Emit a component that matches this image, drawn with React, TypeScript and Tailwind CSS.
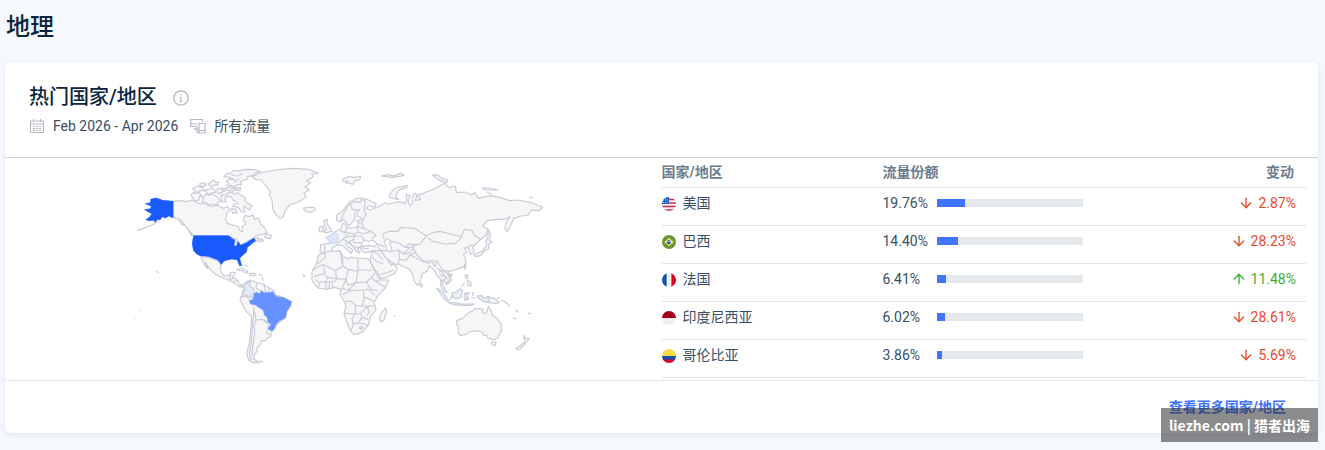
import { ArrowDown, ArrowUp } from "lucide-react";
import type { ReactNode } from "react";

interface CountryRow {
  name: string;
  share: number;
  change: number;
  flag: ReactNode;
}

const COUNTRIES: CountryRow[] = [
  { name: "美国", share: 19.76, change: -2.87, flag: <UsFlag /> },
  { name: "巴西", share: 14.4, change: -28.23, flag: <BrazilFlag /> },
  { name: "法国", share: 6.41, change: 11.48, flag: <FranceFlag /> },
  { name: "印度尼西亚", share: 6.02, change: -28.61, flag: <IndonesiaFlag /> },
  { name: "哥伦比亚", share: 3.86, change: -5.69, flag: <ColombiaFlag /> },
];

export default function App() {
  return (
    <main className="relative min-h-screen bg-[#f5f8fd] pr-[7px] pb-[17px] pl-[5px] font-['Roboto','Noto_Sans_CJK_SC',sans-serif] text-sm text-[#3a4f63]">
      <h1 className="flex h-[62px] items-center pb-2 pl-px text-2xl font-medium text-[#092540]">
        地理
      </h1>

      <section className="rounded-md bg-white shadow-[0_2px_6px_rgba(14,30,62,0.08)]">
        <header className="border-b border-[#cbd1d7] px-6 pt-[21px] pb-5">
          <div className="flex items-center gap-4">
            <h2 className="text-xl leading-7 font-medium text-[#092540]">
              热门国家/地区
            </h2>
            <InfoIcon />
          </div>
          <div className="mt-1 flex items-center gap-3 leading-[22px]">
            <div className="flex items-center gap-2">
              <CalendarIcon />
              <span>Feb 2026 - Apr 2026</span>
            </div>
            <div className="flex items-center gap-2">
              <DevicesIcon />
              <span>所有流量</span>
            </div>
          </div>
        </header>

        <div className="grid grid-cols-2">
          <div className="flex items-start justify-center pt-0.5 pl-3.5">
            <WorldMap />
          </div>
          <div className="pr-3 pb-0.5">
            <CountryTable />
          </div>
        </div>

        <footer className="flex h-[53px] items-center justify-end border-t border-[#e6e9ec] px-8">
          <a href="#countries" className="font-bold text-[#3e74fe]">
            查看更多国家/地区
          </a>
        </footer>
      </section>

      {/* Source stamp over the corner of the card */}
      <div className="absolute right-[7px] bottom-2 flex h-[34px] items-center bg-[#2d2d2d]/55 px-2 font-['Noto_Sans_CJK_SC',sans-serif] text-sm font-bold whitespace-nowrap text-white">
        liezhe.com | 猎者出海
      </div>
    </main>
  );
}

function CountryTable() {
  return (
    <table className="w-full table-fixed border-separate border-spacing-0">
      <thead>
        <tr className="text-left text-[#6b7c8c]">
          <th className="h-[30px] w-[221px] border-b border-[#e2e5e9] p-0 pb-0.5">
            国家/地区
          </th>
          <th className="border-b border-[#e2e5e9] p-0 pb-0.5">流量份额</th>
          <th className="w-[120px] border-b border-[#e2e5e9] p-0 pr-3 pb-0.5 text-right">
            变动
          </th>
        </tr>
      </thead>
      <tbody>
        {COUNTRIES.map((country) => (
          <tr key={country.name}>
            <td className="h-[38px] border-b border-[#e2e5e9] p-0 pb-2">
              <div className="flex items-center gap-[7px]">
                {country.flag}
                {country.name}
              </div>
            </td>
            <td className="border-b border-[#e2e5e9] p-0 pb-2">
              <ShareBar share={country.share} />
            </td>
            <td className="border-b border-[#e2e5e9] p-0 pr-2.5 pb-2">
              <Change value={country.change} />
            </td>
          </tr>
        ))}
      </tbody>
    </table>
  );
}

function ShareBar({ share }: { share: number }) {
  return (
    <div className="flex items-center">
      <span className="w-[54px]">{share.toFixed(2)}%</span>
      <div className="mt-px h-2 w-[146px] bg-[#e6e9ec]">
        <div className="h-full bg-[#3e74fe]" style={{ width: `${share}%` }} />
      </div>
    </div>
  );
}

function Change({ value }: { value: number }) {
  const Arrow = value < 0 ? ArrowDown : ArrowUp;
  return (
    <div
      className={`flex items-center justify-end gap-1 ${
        value < 0 ? "text-[#e6492d]" : "text-[#3faa35]"
      }`}
    >
      <Arrow size={16} strokeWidth={2} />
      {Math.abs(value).toFixed(2)}%
    </div>
  );
}

function InfoIcon() {
  return (
    <svg width="16" height="16" viewBox="0 0 16 16" fill="none" stroke="#b0b6bd" className="mt-0.5">
      <circle cx="8" cy="8" r="7.2" strokeWidth="1.2" />
      <path d="M6.8 7.2H8V11.4M6.6 11.4H9.4" />
      <circle cx="7.9" cy="4.8" r="0.8" fill="#b0b6bd" stroke="none" />
    </svg>
  );
}

function CalendarIcon() {
  return (
    <svg width="16" height="16" viewBox="0 0 16 16" fill="none" stroke="#b4bac2">
      <path d="M1.5 3H14.5V14.5H1.5ZM1.5 6H14.5M4.5 1V4M11.5 1V4" />
      <path d="M4 8.5H12M4 10.5H12M4 12.5H12" strokeDasharray="2 1" />
    </svg>
  );
}

function DevicesIcon() {
  return (
    <svg width="16" height="16" viewBox="0 0 16 16" fill="none" stroke="#b4bac2" strokeWidth="1.2">
      <path d="M12.500 4V1.500H.7V8.500H7M.7 6H7M7 8.500V10.800M3.500 10.800H7" />
      <path d="M9 5.500H15V15H9ZM9 12.500H15" />
      <path d="M7 11V14.500H9" />
    </svg>
  );
}

function Flag({ id, children }: { id: string; children: ReactNode }) {
  return (
    <svg width="14" height="14" viewBox="0 0 14 14" className="mt-0.5 shrink-0">
      <clipPath id={id}>
        <circle cx="7" cy="7" r="7" />
      </clipPath>
      <g clipPath={`url(#${id})`}>{children}</g>
    </svg>
  );
}

function UsFlag() {
  return (
    <Flag id="flag-us">
      <rect width="14" height="14" fill="#f5f5f5" />
      <path d="M0 2.500H14M0 6H14M0 9.500H14M0 13H14" stroke="#d02a48" strokeWidth="1.700" />
      <rect width="7" height="7" fill="#1c56a5" />
      <path d="M1 3H7M1 5.500H7" stroke="#dfe8f5" strokeDasharray="1 1" />
    </Flag>
  );
}

function BrazilFlag() {
  return (
    <Flag id="flag-br">
      <rect width="14" height="14" fill="#699635" />
      <path d="M7 2.800L12 7L7 11.200L2 7Z" fill="#e6d65a" />
      <circle cx="7" cy="7" r="2.500" fill="#f0f0f0" />
      <path d="M4.800 6.600Q7.500 6 9 7.800A2.200 2.200 0 0 1 5 8Z" fill="#1c56a5" />
      <path d="M5.200 5.800Q7 4 8.900 6.300Z" fill="#1c56a5" />
    </Flag>
  );
}

function FranceFlag() {
  return (
    <Flag id="flag-fr">
      <rect width="14" height="14" fill="#f2f2f2" />
      <rect width="4.600" height="14" fill="#0b52a8" />
      <rect x="9.400" width="4.600" height="14" fill="#d80027" />
    </Flag>
  );
}

function IndonesiaFlag() {
  return (
    <Flag id="flag-id">
      <rect width="14" height="14" fill="#f0f0f0" />
      <rect width="14" height="7" fill="#a2001d" />
    </Flag>
  );
}

function ColombiaFlag() {
  return (
    <Flag id="flag-co">
      <rect width="14" height="7" fill="#ffda44" />
      <rect y="7" width="14" height="4" fill="#1c50a5" />
      <rect y="10.500" width="14" height="3.500" fill="#d80027" />
    </Flag>
  );
}

function WorldMap() {
  return (
    <svg
      viewBox="0 0 1260 630"
      className="w-[420px] max-w-full"
      fill="#f6f6f7"
      stroke="#c9ccd6"
      strokeWidth="3.500"
      strokeLinejoin="round"
      role="img"
      aria-label="热门国家/地区"
    >
      <NorthAmerica />
      <SouthAmerica />
      <Eurasia />
      <Africa />
      <Oceania />
    </svg>
  );
}

function NorthAmerica() {
  return (
    <g>
      {/* Canada */}
      <path d="M129 124L150 122L170 125L186 120L205 130L225 132L245 140L262 136L280 145L292 140L300 150L290 162L286 178L292 190L308 195L325 200L330 213L338 216L335 200L348 193L340 180L345 166L358 170L368 164L374 178L385 174L392 192L405 205L412 218L396 224L378 226L366 238L384 232L388 240L376 246L360 240L340 252L328 258L318 246L310 235L296 230H190L182 222L172 205L160 190L148 178L129 173Z" />
      <path d="M146 180L155 182L162 196L154 192ZM178 212L190 226L184 226ZM406 222L424 226L422 236L404 232ZM384 240L396 236L400 242L390 246Z" />
      {/* Arctic islands */}
      <path d="M182 106L190 98L200 100L208 96L212 106L206 112L208 120L196 122L190 116ZM212 108L222 110L226 102L238 106L246 102L262 110L272 124L262 128L264 136L248 132L240 136L228 128L216 126L220 116ZM188 86L196 82L204 78L220 84L224 92L210 92L206 98L196 94ZM226 90L236 88L246 84L254 90L258 98L244 98L240 104L230 98ZM208 72L222 68L228 76L214 80ZM232 72L240 68L252 60L258 68L266 66L264 76L254 74L246 80ZM260 88L268 84L276 88L278 98L270 98L266 104ZM272 106L282 104L290 110L284 116L288 126L276 126Z" />
      <path d="M290 100L304 96L312 102L324 98L334 106L346 114L344 122L354 130L366 138L358 150L350 146L346 138L340 144L346 156L334 156L328 146L320 140L308 140L312 132L324 132L318 124L308 120L304 110L294 110ZM304 146L318 148L322 158L308 160ZM276 84L286 86L300 80L316 84L332 82L330 92L318 90L304 96L292 90L280 94Z" />
      <path d="M282 50L288 42L304 38L310 32L330 32L348 28L378 29L392 35L376 38L370 46L352 50L354 58L340 60L330 66L336 74L322 74L314 80L304 76L290 78L296 70L288 64L298 58L312 58L296 52Z" />
      <path fill="none" d="M304 44L322 48L340 40M312 66L326 58M300 88L322 86" />
      {/* Greenland */}
      <path d="M366 52L386 40L420 33L452 28L490 25L535 28L565 39L545 42L550 50L530 62L542 68L525 80L538 90L522 98L528 112L505 126L480 135L466 150L460 170L450 175L436 162L428 145L426 120L418 104L422 96L408 78L394 60L376 58Z" />
      <path d="M520 144L536 142L552 142L557 150L542 157L526 154Z" />
      {/* United States */}
      <g fill="#195afe" stroke="#195afe" strokeWidth="2">
        <path d="M62 118L78 114L98 121L129 124V173L116 168L106 174L96 170L90 180L82 178L76 187L70 180L60 182L48 179L58 172L66 162L56 156L44 149L62 146L64 138L46 131L62 128Z" />
        <path d="M192 227H296L302 232L314 240L312 258L320 258L324 244L332 256L350 248L362 240L371 235L377 241L362 254L352 262L349 276L338 286L329 294L331 304L335 316L329 318L322 299L305 297L292 300L282 303L273 314L262 299L248 296L235 291L215 289L200 282L191 272L187 252L189 236Z" />
      </g>
      <path fill="none" d="M86 182L72 192L50 202L22 212M78 334L86 338M304 234L318 236L324 246" />
      {/* Mexico and Central America */}
      <path d="M212 290L236 292L262 302L272 314L272 334L282 348L298 346L304 336L316 338L308 352L322 360L328 374L346 376L344 382L326 380L312 368L294 360L270 350L250 338L236 322L226 308L234 326L228 322Z" />
      <path d="M302 344L298 360M310 354L300 360M320 362L310 366M332 374L330 380" fill="none" />
      <path d="M320 330L334 324L354 334L350 340L336 332ZM358 340L374 340L378 346L360 348ZM386 344L396 345M344 314L352 320M396 350L400 364M518 344L526 350" />
      {/* Pacific islets */}
      <path stroke="#e6e8ee" d="M28 449L34 451M12 474L16 477" />
    </g>
  );
}

function SouthAmerica() {
  return (
    <g transform="translate(0 300)">
      <path d="M338 74L348 66L362 60L380 68L400 72L418 84L432 92L436 105L460 112L485 125L482 138L470 155L465 175L445 188L432 208L422 218L424 228L410 236L408 242L394 242L392 254L380 264L382 272L374 284L372 298L388 308L370 308L356 300L350 280L358 250L362 210L365 170L350 155L338 135L330 118L336 104L340 90Z" />
      <path fill="none" d="M372 136L370 170L366 210L364 250L358 280L362 296L372 300M374 154L378 180L398 178L414 186M378 180L372 194L374 220L368 260L366 290M398 178L418 196L412 204M330 112L348 108L358 118M380 70L378 84L394 94M402 76L408 96M418 86L416 98M414 208L410 222L424 224" />
      <path d="M344 76L354 66L362 64L358 76L370 86L374 98L364 104L366 114L350 106L338 104L344 92Z" fill="#e2ebfa" />
      <path d="M372 102L380 97L390 102L394 92L402 98L418 98L428 95L433 104L440 110L460 113L484 125L480 138L470 154L466 173L448 182L438 192L432 206L426 213L414 206L424 194L414 186L412 172L404 166L400 150L386 142L376 134L362 132L358 122L370 118Z" fill="#6592fe" stroke="#6592fe" strokeWidth="2" />
      <path d="M388 303L400 306" />
    </g>
  );
}

function Eurasia() {
  return (
    <g>
      <path d="M620 165L635 155L648 140L660 125L678 116L695 114L710 118L738 130L736 142L715 138L710 145L720 150L745 140L765 128L775 132L805 125L825 130L830 120L828 104L840 106L834 126L840 138L848 128L846 112L854 100L862 104L855 122L872 118L862 106L880 100L910 88L932 76L945 70L955 82L975 78L980 98L1004 96L1025 105L1035 98L1045 115L1080 107L1110 112L1140 122L1165 120L1205 128L1238 142L1228 152L1205 150L1195 165L1175 168L1150 175L1145 190L1132 215L1124 205L1130 185L1140 170L1122 178L1100 178L1072 182L1058 198L1074 208L1068 226L1050 240L1035 255L1028 262L1032 278L1022 282L1014 262L1003 264L1012 276L1000 282L1007 300L1008 312L998 322L975 330L958 334L952 342L964 356L962 364L950 374L942 362L936 366L942 382L952 398L942 394L932 378L932 358L922 348L914 332L898 318L893 332L876 342L870 368L862 376L852 362L846 340L838 328L825 322L810 315L790 310L772 298L785 316L792 310L802 325L795 340L770 352L752 356L745 342L732 325L720 305L722 292L726 274L706 278L694 272L690 262L684 264L688 280L678 274L668 258L650 246L646 252L668 270L664 280L652 270L638 256L622 254L610 262L602 276L584 280L570 276L572 254L600 250L598 240L588 232L602 226L614 216L626 210L634 205L638 190L646 192L650 204L670 204L682 200L686 188L680 182L700 178L690 172L680 168L684 155L690 148L680 150L674 162L674 178L664 190L656 198L648 188L640 178L632 186L620 182Z" />
      {/* Black Sea and Caspian Sea */}
      <path fill="#fff" d="M694 250L704 240L716 244L728 240L742 252L734 260L712 256L696 260ZM762 246L770 236L784 242L778 250L784 262L782 276L770 272L770 260Z" />
      <path fill="none" d="M632 184L640 162L652 140L662 130L676 124L690 128L694 118L706 124L702 150L708 164L700 178M662 130L666 148L678 150M700 178L696 192L704 206L722 214L738 226L724 236M686 188L698 190M682 200L704 206M650 204L646 218L630 212M650 218L674 222L684 216L680 200M684 216L700 222L722 214M646 218L650 230L674 228L674 222M610 246L626 248L638 238L650 230M638 238L658 246L670 238L674 228L694 228L704 242M658 246L668 258L684 264L694 258M670 238L672 248L694 248M584 280L584 254" />
      <path fill="none" d="M762 236L758 222L778 214L804 214L812 202L838 204L856 206L870 216L890 228L880 238L872 252L850 254L836 252L824 262L808 250L790 244L784 248M890 228L908 218L930 214L960 222L996 230L990 238L976 250L944 252L910 244L894 234M994 228L1004 208L1026 212L1034 226L1052 238M742 252L764 260M726 272L742 272L770 272M692 264L716 266M742 258L754 274L766 292L774 300M726 274L744 282L758 300M726 292L740 304L760 312M784 274L806 270L820 282L836 266L850 254M806 270L808 290L806 312M820 282L836 280L850 266L844 256M806 298L830 300L840 284L856 278M840 284L864 298L882 306L900 310M850 266L862 286L882 304L902 302M902 302L916 320L918 308L908 300M920 300L930 318L938 330L956 334M922 324L940 340L948 356M928 344L938 346M1004 266L1018 258L1030 254M752 344L776 336L792 330M850 266L854 256L872 252M824 262L838 262" />
      {/* British Isles */}
      <path d="M582 182L592 178L590 190L598 202L606 214L590 218L580 216L590 208L584 198ZM568 202L580 198L580 212L568 216Z" />
      <path d="M590 232L602 226L614 218L624 226L624 240L616 250L600 250L596 240Z" fill="#dce7fb" stroke="#cfdcf5" />
      {/* Northern islands */}
      <path d="M638 58L654 50L674 52L692 48L690 58L674 62L668 74L658 68L648 70L652 62L640 66ZM754 48L776 44L790 48L812 40L822 46L806 50L786 52Z" />
      <path d="M778 112L782 98L798 84L832 76L830 82L804 92L796 110L806 118L790 116ZM908 46L922 44L936 56L954 60L950 68L930 62ZM1056 84L1078 84L1104 90L1068 90ZM1072 98L1086 102M1198 112L1210 114" />
      {/* Japan, Sakhalin, Sri Lanka, Taiwan */}
      <path d="M1074 206L1082 224L1078 240L1086 246L1076 252L1076 266L1062 274L1052 286L1038 290L1032 284L1056 274L1070 256L1068 244L1074 232ZM870 370L878 374L876 382L870 378ZM1004 312L1008 318L1004 328ZM958 342L966 342L962 350Z" />
    </g>
  );
}

function Africa() {
  return (
    <g transform="translate(480 210)">
      <path d="M86 74L104 70L118 64L150 62L156 76L172 86L182 82L205 84L234 86L242 96L250 116L262 136L270 150L296 150L286 174L264 196L252 218L258 240L240 262L236 284L216 308L192 314L182 304L170 275L162 250L168 230L160 208L150 194L152 178L134 172L108 178L84 174L66 152L66 126L80 98Z" />
      <path fill="none" d="M104 70L106 82L82 102M66 122L84 110L100 104L104 130L72 140M100 104L136 122L158 108L150 62M136 122L140 146L112 142L106 134M158 82L158 108L174 118L204 124V84M204 120H246M174 118L168 148L140 146M204 124L198 158L174 166L168 148M198 158L230 156L244 142L254 130M244 142L256 154L268 152M256 154L286 172M230 156L242 178L262 182M168 148L156 176L176 180L198 158M158 194L180 182L220 180L222 206L216 228L196 226L184 214L166 214M220 180L236 178L254 196M222 200L252 214M216 228L232 230L256 226M164 250L196 252L196 226M196 252L212 250L232 230M196 252L186 266L190 286L182 304M190 282L206 278L216 262L212 250M216 262L234 268M206 280L226 282L234 288M212 290L218 292L214 298L208 294ZM84 174L90 158L76 150M92 154L108 158L108 178M112 142L106 158M118 160L118 176M126 156L128 174M106 158L134 154L140 146M232 230L238 246L230 258" />
      <path d="M286 234L290 244L282 270L272 276L268 266L274 250Z" />
      <path d="M38 136L46 140M310 256L316 262" />
    </g>
  );
}

function Oceania() {
  return (
    <g transform="translate(810 240)">
      {/* Indonesia, Philippines and New Guinea */}
      <g fill="#e8edf6" stroke="#c5ccda">
        <path d="M110 144L120 150L134 164L144 178L146 186L134 178L122 162ZM146 188L166 188L186 192L222 192L218 196L190 196L160 194ZM156 160L168 156L180 146L188 152L184 170L172 176L158 172ZM194 160L208 158L200 164L206 178L200 176L196 182L192 174ZM216 156L220 162L218 168M212 174L226 174M232 168L244 166L252 174L264 170L268 188L250 184L238 176Z" />
      </g>
      <path d="M264 170L284 176L298 188L286 190L268 188ZM290 176L300 172M304 180L316 186L330 200M196 104L204 106L202 116L196 114ZM202 122L212 126L214 138L204 136ZM184 140L194 128M348 208L354 218M340 232L350 238M384 222L392 218" />
      {/* Mainland Southeast Asia */}
      <path fill="none" d="M118 96L130 92L142 100L150 112L146 126L136 130M122 108L136 108L144 118M124 122L138 116M150 182L156 166" />
      {/* Australia and New Zealand */}
      <path d="M170 242L186 236L200 224L208 216L218 214L224 206L238 206L250 208L246 216L256 222L262 212L265 198L272 210L276 224L290 234L304 254L304 272L294 292L282 300L264 294L258 284L250 286L246 276L230 272L208 276L196 284L180 286L174 276L176 264L170 252ZM274 306L288 306L284 318L276 314Z" />
      <path d="M370 286L376 296L388 296L380 306L372 312L374 302ZM368 310L374 314L362 326L354 330L348 326L360 318Z" />
    </g>
  );
}
